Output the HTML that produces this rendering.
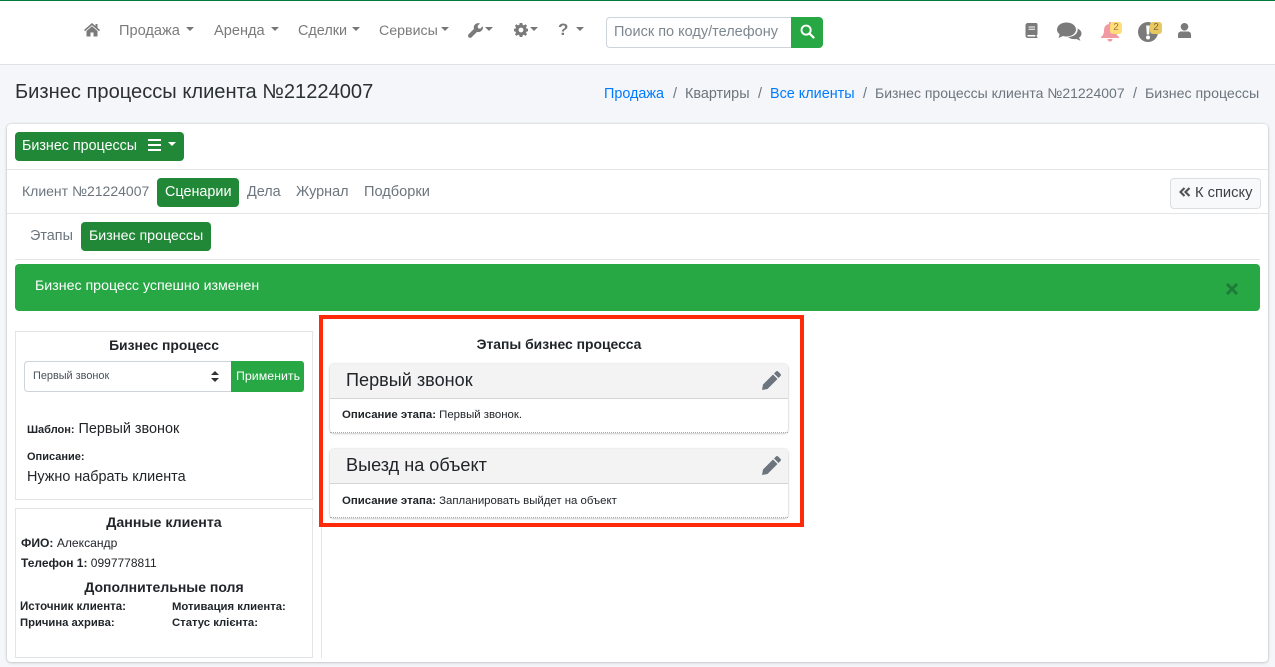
<!DOCTYPE html>
<html lang="ru"><head><meta charset="utf-8"><title>Бизнес процессы</title>
<style>
html,body{margin:0;padding:0;width:1275px;height:667px;overflow:hidden;background:#f4f6f9;font-family:"Liberation Sans",sans-serif;color:#212529}
*{box-sizing:border-box}
.a{position:absolute}
.t{position:absolute;white-space:nowrap;line-height:20px}
.n{font-size:14.6px;color:#7a7a7a}
.g{color:#6c757d}
.car{position:absolute;width:0;height:0;border-top:4.5px solid #777;border-left:4.5px solid transparent;border-right:4.5px solid transparent}
b{font-weight:700}
svg{position:absolute;display:block}
.btn{position:absolute;background:#218838;border-radius:4px}
.box{position:absolute;border:1px solid #e2e4e7;background:#fff}
.stage{position:absolute;left:330px;width:457.5px;background:#fff;border-radius:4px;box-shadow:0 0 2px rgba(0,0,0,.18),0 1px 2px rgba(0,0,0,.14)}
.stage .h{position:absolute;left:0;top:0;width:100%;height:35px;background:#f3f3f3;border-bottom:1px solid #d5d5d5;border-radius:4px 4px 0 0}
.stage .d{position:absolute;left:0;bottom:0;width:100%;border-bottom:1px dotted #aaa;height:1px}
.badge{position:absolute;top:22px;width:12px;height:12px;border-radius:3px;font-size:10px;line-height:12px;text-align:center}
</style></head><body>
<div class="a" style="left:0;top:0;width:1275px;height:65px;background:#fff;border-bottom:1px solid #dee2e6"></div>
<div class="a" style="left:0;top:0;width:1275px;height:1px;background:#007a3d"></div>

<svg style="left:84px;top:22px" width="16" height="15" viewBox="0 0 16 15"><path fill="#7a7a7a" d="M8 1 0 8l1 1.200 7-6 7 6L16 8l-2.500-2.200V2h-2v2zM8 4.300 2.500 9v5.500h4V10.500h3v4h4V9z"/></svg>
<span class="t n" style="left:119px;top:21px">Продажа</span><i class="car" style="left:186px;top:27px"></i>
<span class="t n" style="left:214px;top:21px">Аренда</span><i class="car" style="left:271px;top:27px"></i>
<span class="t" style="left:298px;top:21px;font-size:14.4px;color:#7a7a7a">Сделки</span><i class="car" style="left:352px;top:27px"></i>
<span class="t" style="left:379px;top:21px;font-size:14.2px;color:#7a7a7a">Сервисы</span><i class="car" style="left:441px;top:27px"></i>
<svg style="left:468px;top:23px" width="15" height="15" viewBox="0 0 15 15"><path fill="#7a7a7a" d="M14.700 3.200 12.300 5.600 10 5.200 9.600 2.900 12 .5C10.300-.200 8.300.2 7 1.500 5.800 2.700 5.500 4.400 6 5.900L.6 11.300c-.8.800-.8 2.200 0 3 .8.800 2.200.8 3 0L9.100 8.900c1.500.5 3.200.1 4.400-1.100 1.300-1.200 1.800-3 1.200-4.600z"/></svg>
<i class="car" style="left:485px;top:27px"></i>
<svg style="left:514px;top:23px" width="14" height="14" viewBox="0 0 14 14"><path fill="#7a7a7a" fill-rule="evenodd" d="M5.700 0h2.600l.4 1.900 1.200.5L11.600 1.300l1.400 1.500-1 1.600.5 1.200L14 5.800v2.400l-1.500.4-.5 1.200 1 1.600-1.400 1.500-1.700-1.100-1.200.5L8.300 14H5.700l-.4-1.700-1.200-.5-1.700 1.100L1 11.400l1-1.600-.5-1.200L0 8.200V5.800l1.500-.2L2 4.400 1 2.800l1.400-1.500 1.700 1.100 1.200-.5zM7 4.600a2.400 2.400 0 1 0 0 4.800 2.400 2.400 0 0 0 0-4.800z"/></svg>
<i class="car" style="left:530px;top:27px"></i>
<span class="t" style="left:558px;top:20px;font-size:17px;font-weight:700;color:#7a7a7a">?</span><i class="car" style="left:576px;top:27px"></i>

<div class="a" style="left:606px;top:17px;width:186px;height:31px;background:#fff;border:1px solid #ced4da;border-right:0;border-radius:4px 0 0 4px"></div>
<span class="t" style="left:614px;top:22px;font-size:14.5px;color:#7d8790">Поиск по коду/телефону</span>
<div class="a" style="left:791px;top:17px;width:32px;height:31px;background:#28a745;border-radius:0 4px 4px 0"></div>
<svg style="left:800px;top:24px" width="15" height="15" viewBox="0 0 16 16"><circle cx="6.500" cy="6.500" r="4.900" fill="none" stroke="#fff" stroke-width="2"/><path d="M10.200 10.200l4.200 4.200" stroke="#fff" stroke-width="2.400" stroke-linecap="round"/></svg>

<svg style="left:1025px;top:23px" width="13" height="15" viewBox="0 0 12 15"><path fill="#7a7a7a" fill-rule="evenodd" d="M2.500 0H10.500Q12 0 12 1.500V11.500l-.8.800v1.200l.8.500v1H2.500C1 15 0 14 0 12.500v-10C0 1 1 0 2.500 0zM3 3.500v1h6.500v-1zm0 2.200v1h6.500v-1zM2.500 12c-1 0-1 1.500 0 1.500h7.300V12z"/></svg>
<svg style="left:1057px;top:22px" width="25" height="19" viewBox="0 0 25 19"><ellipse cx="9.500" cy="7.500" rx="9.500" ry="7" fill="#7a7a7a"/><path fill="#7a7a7a" d="M3 11 1.500 16 7 13.500z"/><path fill="#7a7a7a" d="M20.500 6.500C23 7.600 24.500 9.400 24.500 11.500c0 1.700-1 3.200-2.500 4.300l1.500 3-4.200-1.800c-3.400.5-6.300-.3-8.300-2 5.500 0 10.500-3.500 9.500-8.500z"/></svg>
<svg style="left:1100px;top:22px" width="20" height="20" viewBox="0 0 20 20"><path fill="#f29aa3" d="M9 0h2v2c3.500.6 5 3.200 5 6.500 0 3.500 1.200 5 3 6.500v1H1v-1c1.800-1.500 3-3 3-6.500C4 5.200 5.500 2.600 9 2zM7.500 17h5c0 1.500-1.100 2.500-2.500 2.500S7.500 18.500 7.500 17z"/></svg>
<div class="badge" style="left:1110px;background:#ffdd77;color:#9a7a55">2</div>
<svg style="left:1138px;top:22px" width="20" height="20" viewBox="0 0 20 20"><circle cx="10" cy="10" r="10" fill="#7a7a7a"/><path fill="#fff" d="M8.200 3.500h3.600l-.6 9H8.800zM10 13.500a2 2 0 1 1 0 4 2 2 0 0 1 0-4z"/></svg>
<div class="badge" style="left:1150px;background:#e8c860;color:#806a3a">2</div>
<svg style="left:1178px;top:23px" width="13" height="15" viewBox="0 0 13 15"><circle cx="6.500" cy="3.800" r="3.800" fill="#7a7a7a"/><path fill="#7a7a7a" d="M3 8.500h7c1.700 0 3 1.300 3 3V15H0v-3.500c0-1.700 1.300-3 3-3z"/></svg>

<span class="t" style="left:15px;top:80px;font-size:20.1px;line-height:24px;color:#2b3035">Бизнес процессы клиента №21224007</span>
<span class="t" style="left:604px;top:84px;font-size:14.4px;color:#007bff">Продажа</span>
<span class="t g" style="left:673px;top:84px;font-size:14.4px">/</span>
<span class="t g" style="left:685px;top:84px;font-size:14.4px">Квартиры</span>
<span class="t g" style="left:758px;top:84px;font-size:14.4px">/</span>
<span class="t" style="left:770px;top:84px;font-size:14.4px;color:#007bff">Все клиенты</span>
<span class="t g" style="left:863px;top:84px;font-size:14.4px">/</span>
<span class="t g" style="left:875px;top:83px;font-size:14px">Бизнес процессы клиента №21224007</span>
<span class="t g" style="left:1133px;top:84px;font-size:14.4px">/</span>
<span class="t g" style="left:1145px;top:84px;font-size:14.2px">Бизнес процессы</span>

<div class="a" style="left:7px;top:124px;width:1261px;height:538px;background:#fff;border-radius:4px;box-shadow:0 0 2px rgba(0,0,0,.16),0 1px 3px rgba(0,0,0,.14)"></div>
<div class="a" style="left:7px;top:169px;width:1261px;height:1px;background:#e3e5e7"></div>
<div class="a" style="left:7px;top:213px;width:1261px;height:1px;background:#e3e5e7"></div>
<div class="a" style="left:15px;top:259px;width:1245px;height:1px;background:#e3e5e7"></div>

<div class="btn" style="left:15px;top:132px;width:169px;height:29px"></div>
<span class="t" style="left:22px;top:136px;font-size:14.3px;color:#fff">Бизнес процессы</span>
<svg style="left:148px;top:139px" width="13" height="12" viewBox="0 0 13 12"><path fill="#fff" d="M0 0h13v2H0zM0 5h13v2H0zM0 10h13v2H0z"/></svg>
<i class="car" style="left:168px;top:142px;border-top-color:#fff"></i>

<span class="t g" style="left:22px;top:181px;font-size:14px">Клиент №21224007</span>
<div class="btn" style="left:157px;top:178px;width:82px;height:29px"></div>
<span class="t" style="left:165px;top:182px;font-size:14.4px;color:#fff">Сценарии</span>
<span class="t g" style="left:247px;top:182px;font-size:14.4px">Дела</span>
<span class="t g" style="left:296px;top:182px;font-size:14.4px">Журнал</span>
<span class="t g" style="left:364px;top:182px;font-size:14.6px">Подборки</span>

<div class="a" style="left:1170px;top:178px;width:91px;height:31px;background:#f8f9fa;border:1px solid #dcdfe2;border-radius:4px"></div>
<svg style="left:1179px;top:187px" width="12" height="10" viewBox="0 0 12 10"><path d="M5.500 1 1.500 5l4 4M10.500 1 6.500 5l4 4" fill="none" stroke="#555" stroke-width="2.200"/></svg>
<span class="t" style="left:1195px;top:183px;font-size:14.7px;color:#3d4246">К списку</span>

<span class="t g" style="left:30px;top:226px;font-size:14.4px">Этапы</span>
<div class="btn" style="left:81px;top:222px;width:130px;height:29px"></div>
<span class="t" style="left:89px;top:226px;font-size:14.2px;color:#fff">Бизнес процессы</span>

<div class="a" style="left:15px;top:264px;width:1245px;height:47px;background:#28a745;border-radius:4px"></div>
<span class="t" style="left:35px;top:276px;font-size:14.2px;color:#fff">Бизнес процесс успешно изменен</span>
<svg style="left:1225px;top:282px" width="14" height="14" viewBox="0 0 14 14"><path d="M2 2l10 10M12 2 2 12" stroke="#1c7c38" stroke-width="3"/></svg>

<div class="a" style="left:321px;top:316px;width:1px;height:342px;background:#e3e5e7"></div>

<div class="box" style="left:15px;top:331px;width:298px;height:169px"></div>
<span class="t" style="left:15px;top:335px;width:298px;text-align:center;font-size:13.9px;font-weight:700">Бизнес процесс</span>
<div class="a" style="left:24px;top:361px;width:208px;height:31px;background:#fff;border:1px solid #ced4da;border-right:0;border-radius:4px 0 0 4px"></div>
<span class="t" style="left:33px;top:366px;font-size:10.9px;color:#495057">Первый звонок</span>
<svg style="left:211px;top:371px" width="8" height="11" viewBox="0 0 8 11"><path fill="#333" d="M4 0 8 4H0zM4 11 0 7h8z"/></svg>
<div class="a" style="left:231px;top:361px;width:73px;height:31px;background:#28a745;border-radius:0 3px 3px 0"></div>
<span class="t" style="left:236px;top:366px;font-size:12.4px;color:#fff">Применить</span>
<span class="t" style="left:27px;top:419px;font-size:14.4px"><b style="font-size:11px">Шаблон:</b> Первый звонок</span>
<span class="t" style="left:27px;top:447px;font-size:11px"><b>Описание:</b></span>
<span class="t" style="left:27px;top:467px;font-size:14.4px">Нужно набрать клиента</span>

<div class="box" style="left:15px;top:508px;width:298px;height:150px"></div>
<span class="t" style="left:15px;top:513px;width:298px;text-align:center;font-size:14.2px;font-weight:700">Данные клиента</span>
<span class="t" style="left:21px;top:533px;font-size:12.1px"><b>ФИО:</b> Александр</span>
<span class="t" style="left:21px;top:553px;font-size:12px"><b>Телефон 1:</b> 0997778811</span>
<span class="t" style="left:15px;top:577px;width:298px;text-align:center;font-size:14px;font-weight:700">Дополнительные поля</span>
<span class="t" style="left:20px;top:597px;font-size:11.5px;font-weight:700">Источник клиента:</span>
<span class="t" style="left:172px;top:597px;font-size:11.3px;font-weight:700">Мотивация клиента:</span>
<span class="t" style="left:20px;top:613px;font-size:11.25px;font-weight:700">Причина ахрива:</span>
<span class="t" style="left:172px;top:613px;font-size:11.3px;font-weight:700">Статус клієнта:</span>

<span class="t" style="left:330px;top:334px;width:458px;text-align:center;font-size:13.9px;font-weight:700">Этапы бизнес процесса</span>

<div class="stage" style="top:364px;height:69px"><div class="h"></div><div class="d"></div></div>
<span class="t" style="left:346px;top:370px;font-size:18.1px">Первый звонок</span>
<svg style="left:762px;top:371px" width="19" height="19" viewBox="0 0 19 19"><path fill="#6c757d" d="M14 .5c.6-.6 1.500-.6 2.100 0l2.400 2.400c.6.6.6 1.500 0 2.100L16.500 7 12 2.500zM11 3.500 15.500 8 5.500 18 0 19l1-5.500z"/></svg>
<span class="t" style="left:342px;top:405px;font-size:11.4px"><b>Описание этапа:</b> Первый звонок.</span>

<div class="stage" style="top:449px;height:69px"><div class="h"></div><div class="d"></div></div>
<span class="t" style="left:346px;top:455px;font-size:18.1px">Выезд на объект</span>
<svg style="left:762px;top:456px" width="19" height="19" viewBox="0 0 19 19"><path fill="#6c757d" d="M14 .5c.6-.6 1.500-.6 2.100 0l2.400 2.400c.6.6.6 1.500 0 2.100L16.500 7 12 2.500zM11 3.500 15.500 8 5.500 18 0 19l1-5.500z"/></svg>
<span class="t" style="left:342px;top:491px;font-size:11.4px"><b>Описание этапа:</b> Запланировать выйдет на объект</span>

<div class="a" style="left:319px;top:315px;width:484.500px;height:211.500px;border:4.500px solid #ff2a0a"></div>
</body></html>
